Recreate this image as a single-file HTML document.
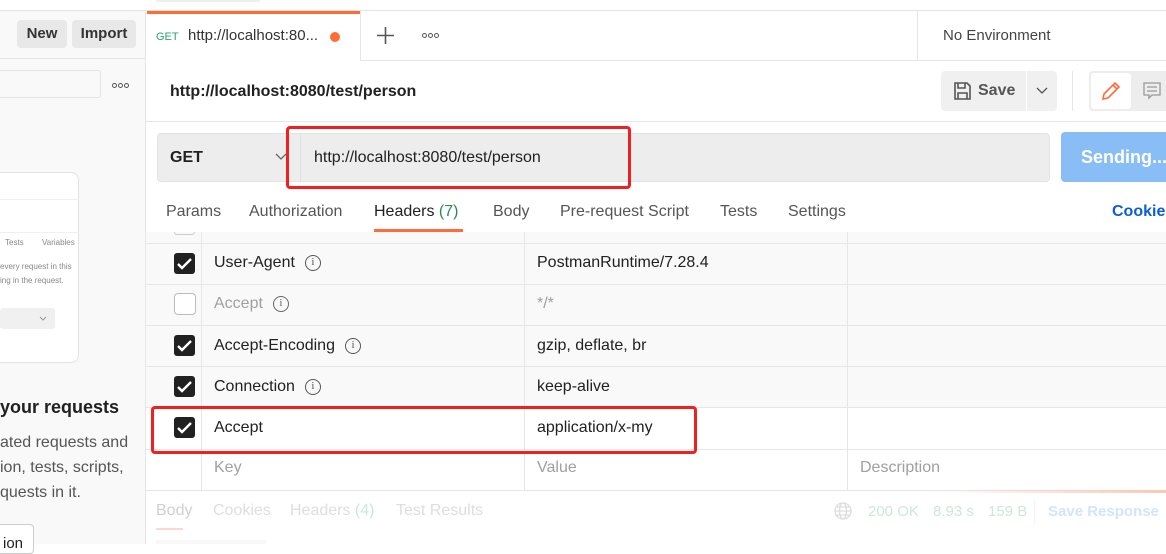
<!DOCTYPE html>
<html><head><meta charset="utf-8"><style>
*{box-sizing:border-box;margin:0;padding:0}
body{width:1166px;height:544px;overflow:hidden;background:#fff;font-family:"Liberation Sans",Arial,sans-serif;position:relative;color:#212121}
.a{position:absolute;white-space:nowrap}
.cb{position:absolute;width:21px;height:21px;border-radius:3px;background:#212121}
.cb svg{position:absolute;left:3px;top:4px}
.r{position:absolute;display:flex;align-items:center;height:20px;font-size:16px;white-space:nowrap}
.info{display:inline-block;width:16px;height:16px;border:1.4px solid #555;border-radius:50%;font-size:11px;line-height:13px;text-align:center;font-family:"Liberation Serif",serif;margin-left:10px;color:#555}
.hl{position:absolute;height:1px;background:#e6e6e6}
.vl{position:absolute;width:1px;background:#e6e6e6}
.red{position:absolute;border:3px solid #f02020;border-radius:4px}
.dots{position:absolute;display:flex;gap:1px}
.dots i{width:5px;height:5px;border:1.2px solid #555;border-radius:50%}
.t{font-size:16px}
</style></head><body>
<div class="hl" style="left:0;top:10px;width:1166px;background:#e3e3e3"></div>
<div class="a" style="left:156px;top:0;width:104px;height:2px;background:#eee"></div>
<div class="a" style="left:0;top:11px;width:146px;height:533px;background:#f9f9f9;border-right:1px solid #e6e6e6"></div>
<div class="a" style="left:17px;top:20px;width:50px;height:28px;background:#e8e8e8;border-radius:4px;font-size:15px;font-weight:bold;line-height:28px;text-align:center;color:#333">New</div>
<div class="a" style="left:72px;top:20px;width:64px;height:28px;background:#e8e8e8;border-radius:4px;font-size:15px;font-weight:bold;line-height:28px;text-align:center;color:#333">Import</div>
<div class="hl" style="left:0;top:58px;width:146px"></div>
<div class="a" style="left:-5px;top:70px;width:106px;height:28px;border:1px solid #e3e3e3;border-radius:3px;background:#f9f9f9"></div>
<div class="dots" style="left:112px;top:83px"><i></i><i></i><i></i></div>
<div class="a" style="left:-10px;top:172px;width:89px;height:191px;background:#fff;border:1px solid #e3e3e3;border-radius:8px"></div>
<div class="hl" style="left:0;top:199px;width:78px;background:#f0f0f0"></div>
<div class="hl" style="left:0;top:232px;width:78px;background:#f0f0f0"></div>
<div class="a" style="left:5px;top:238px;font-size:8px;color:#888">Tests</div>
<div class="a" style="left:42px;top:238px;font-size:8px;color:#888">Variables</div>
<div class="a" style="left:0;top:262px;font-size:8px;color:#888">every request in this</div>
<div class="a" style="left:0;top:276px;font-size:8px;color:#888">ing in the request.</div>
<div class="a" style="left:0;top:308px;width:55px;height:21px;background:#f0f0f0;border-radius:3px"></div>
<svg class="a" style="left:39px;top:316px" width="8" height="5" viewBox="0 0 8 5" fill="none" stroke="#999" stroke-width="1"><path d="M1 1l3 3 3-3"/></svg>
<div class="a" style="left:0;top:397px;font-size:18px;font-weight:bold;color:#212121">your requests</div>
<div class="a" style="left:0;top:430px;font-size:16px;color:#555;line-height:25px">ated requests and<br>ion, tests, scripts,<br>quests in it.</div>
<div class="a" style="left:-10px;top:524px;width:44px;height:30px;border:1px solid #ccc;border-radius:4px;background:#fff;font-size:15px;padding:10px 0 0 12px">ion</div>
<div class="a" style="left:147px;top:11px;width:213px;height:3px;background:#ff6c37"></div>
<div class="vl" style="left:360px;top:11px;height:50px"></div>
<div class="vl" style="left:917px;top:11px;height:50px"></div>
<div class="hl" style="left:360px;top:60px;width:806px"></div>
<div class="a" style="left:156px;top:31px;font-size:11px;color:#2aa56b">GET</div>
<div class="a" style="left:188px;top:27px;font-size:15px;color:#333">http://localhost:80...</div>
<div class="a" style="left:330px;top:32px;width:10px;height:10px;border-radius:50%;background:#ff6c37"></div>
<svg class="a" style="left:377px;top:27px" width="17" height="17" viewBox="0 0 17 17" stroke="#555" stroke-width="1.6"><path d="M8.5 0v17M0 8.5h17"/></svg>
<div class="dots" style="left:422px;top:33px"><i></i><i></i><i></i></div>
<div class="a" style="left:943px;top:27px;font-size:15px;color:#444">No Environment</div>
<div class="a" style="left:170px;top:83px;font-size:16px;font-weight:bold;color:#212121">http://localhost:8080/test/person</div>
<div class="a" style="left:941px;top:71px;width:85px;height:40px;background:#f0f0f0;border-radius:4px 0 0 4px"></div>
<svg class="a" style="left:953px;top:81px" width="19" height="20" viewBox="0 0 19 20" fill="none" stroke="#555" stroke-width="1.6"><path d="M2 2h12l3 3v13H2z"/><path d="M5 2v5h7V2"/><path d="M5 18v-6h9v6"/></svg>
<div class="a" style="left:978px;top:82px;font-size:16px;font-weight:bold;color:#555">Save</div>
<div class="a" style="left:1027px;top:71px;width:30px;height:40px;background:#f0f0f0;border-radius:0 4px 4px 0"></div>
<svg class="a" style="left:1036px;top:87px" width="12" height="8" viewBox="0 0 12 8" fill="none" stroke="#555" stroke-width="1.3"><path d="M1 1l5 5 5-5"/></svg>
<div class="vl" style="left:1072px;top:71px;height:40px"></div>
<div class="a" style="left:1089px;top:71px;width:80px;height:40px;background:#ededed;border-radius:4px"></div>
<div class="a" style="left:1091px;top:73px;width:40px;height:36px;background:#fff;border-radius:3px"></div>
<svg class="a" style="left:1101px;top:81px" width="20" height="20" viewBox="0 0 20 20" fill="none" stroke="#ff6c37" stroke-width="1.6"><path d="M2 18l1-5L14 2l4 4L7 17z"/><path d="M12 4l4 4"/></svg>
<svg class="a" style="left:1143px;top:82px" width="18" height="18" viewBox="0 0 18 18" fill="none" stroke="#999" stroke-width="1.3"><path d="M1 1h16v12H9l-3 3v-3H1z"/><path d="M4 5h10M4 9h10"/></svg>
<div class="hl" style="left:146px;top:121px;width:1020px"></div>
<div class="a" style="left:157px;top:133px;width:893px;height:49px;background:#ededed;border:1px solid #e3e3e3;border-radius:4px"></div>
<div class="vl" style="left:300px;top:134px;height:47px;background:#e0e0e0"></div>
<div class="a" style="left:170px;top:149px;font-size:16px;font-weight:bold;color:#212121">GET</div>
<svg class="a" style="left:275px;top:153px" width="12" height="8" viewBox="0 0 12 8" fill="none" stroke="#666" stroke-width="1.3"><path d="M1 1l5 5 5-5"/></svg>
<div class="a" style="left:314px;top:149px;font-size:16px;color:#212121">http://localhost:8080/test/person</div>
<div class="red" style="left:286px;top:126px;width:345px;height:63px"></div>
<div class="a" style="left:1061px;top:132px;width:110px;height:50px;background:#88bdf5;border-radius:4px;color:#fff;font-size:18px;font-weight:bold;padding:15px 0 0 20px">Sending...</div>
<div class="a t" style="left:166px;top:203px;color:#555">Params</div>
<div class="a t" style="left:249px;top:203px;color:#555">Authorization</div>
<div class="a t" style="left:374px;top:203px;color:#212121">Headers <span style="color:#2a8a5a">(7)</span></div>
<div class="a" style="left:374px;top:229px;width:89px;height:3px;background:#ff6c37"></div>
<div class="a t" style="left:493px;top:203px;color:#555">Body</div>
<div class="a t" style="left:560px;top:203px;color:#555">Pre-request Script</div>
<div class="a t" style="left:720px;top:203px;color:#555">Tests</div>
<div class="a t" style="left:788px;top:203px;color:#555">Settings</div>
<div class="a t" style="left:1112px;top:203px;font-weight:bold;color:#0b5ed7">Cookies</div>
<div class="a" style="left:146px;top:232px;width:1020px;height:176px;background:#f9f9f9"></div>
<div class="hl" style="left:146px;top:243px;width:1020px"></div>
<div class="hl" style="left:146px;top:284px;width:1020px"></div>
<div class="hl" style="left:146px;top:325px;width:1020px"></div>
<div class="hl" style="left:146px;top:366px;width:1020px"></div>
<div class="hl" style="left:146px;top:407px;width:1020px"></div>
<div class="hl" style="left:146px;top:449px;width:1020px"></div>
<div class="hl" style="left:146px;top:490px;width:1020px"></div>
<div class="vl" style="left:201px;top:232px;height:258px"></div>
<div class="vl" style="left:524px;top:232px;height:258px"></div>
<div class="vl" style="left:847px;top:232px;height:258px"></div>
<div class="a" style="left:174px;top:232px;width:21px;height:3px;border:1px solid #ccc;border-top:none;border-radius:0 0 3px 3px"></div>
<div class="cb" style="left:174px;top:253px"><svg width="15" height="13" viewBox="0 0 15 13" fill="none" stroke="#fff" stroke-width="2.4"><path d="M1 7l4 4 9-9"/></svg></div>
<div class="r" style="left:214px;top:253px">User-Agent<span class="info">i</span></div>
<div class="r" style="left:537px;top:253px">PostmanRuntime/7.28.4</div>
<div class="a" style="left:174px;top:293px;width:22px;height:22px;border:1px solid #bbb;border-radius:4px;background:#fff"></div>
<div class="r" style="left:214px;top:294px;color:#a0a0a0">Accept<span class="info" style="border-color:#666;color:#666">i</span></div>
<div class="r" style="left:537px;top:294px;color:#a0a0a0">*/*</div>
<div class="cb" style="left:174px;top:335px"><svg width="15" height="13" viewBox="0 0 15 13" fill="none" stroke="#fff" stroke-width="2.4"><path d="M1 7l4 4 9-9"/></svg></div>
<div class="r" style="left:214px;top:336px">Accept-Encoding<span class="info">i</span></div>
<div class="r" style="left:537px;top:336px">gzip, deflate, br</div>
<div class="cb" style="left:174px;top:376px"><svg width="15" height="13" viewBox="0 0 15 13" fill="none" stroke="#fff" stroke-width="2.4"><path d="M1 7l4 4 9-9"/></svg></div>
<div class="r" style="left:214px;top:377px">Connection<span class="info">i</span></div>
<div class="r" style="left:537px;top:377px">keep-alive</div>
<div class="cb" style="left:174px;top:417px"><svg width="15" height="13" viewBox="0 0 15 13" fill="none" stroke="#fff" stroke-width="2.4"><path d="M1 7l4 4 9-9"/></svg></div>
<div class="r" style="left:214px;top:418px">Accept</div>
<div class="r" style="left:537px;top:418px">application/x-my</div>
<div class="red" style="left:151px;top:406px;width:546px;height:48px"></div>
<div class="r" style="left:214px;top:458px;color:#a0a0a0">Key</div>
<div class="r" style="left:537px;top:458px;color:#a0a0a0">Value</div>
<div class="r" style="left:860px;top:458px;color:#a0a0a0">Description</div>
<div class="a t" style="left:156px;top:502px;color:#d0d0d0">Body</div>
<div class="a" style="left:156px;top:528px;width:27px;height:2px;background:#fcd9cc"></div>
<div class="a t" style="left:213px;top:502px;color:#dedede">Cookies</div>
<div class="a t" style="left:290px;top:502px;color:#dedede">Headers <span style="color:#c8ead6">(4)</span></div>
<div class="a t" style="left:396px;top:502px;color:#dedede">Test Results</div>
<div class="a" style="left:933px;top:490px;width:233px;height:3px;background:linear-gradient(to right,rgba(255,160,130,0),#fcc7b5)"></div>
<svg class="a" style="left:834px;top:502px" width="18" height="18" viewBox="0 0 18 18" fill="none" stroke="#ddd" stroke-width="1.3"><circle cx="9" cy="9" r="8"/><ellipse cx="9" cy="9" rx="3.5" ry="8"/><path d="M1 9h16M2.5 5h13M2.5 13h13"/></svg>
<div class="a" style="left:868px;top:503px;font-size:15px;color:#cde8d6">200 OK</div>
<div class="a" style="left:933px;top:503px;font-size:15px;color:#cde8d6">8.93 s</div>
<div class="a" style="left:988px;top:503px;font-size:15px;color:#cde8d6">159 B</div>
<div class="vl" style="left:1034px;top:500px;height:24px;background:#f3f3f3"></div>
<div class="a" style="left:1048px;top:503px;font-size:15px;font-weight:bold;color:#d3e5fa">Save Response</div>
<div class="a" style="left:156px;top:540px;width:110px;height:4px;background:#f8f8f8"></div>
</body></html>
